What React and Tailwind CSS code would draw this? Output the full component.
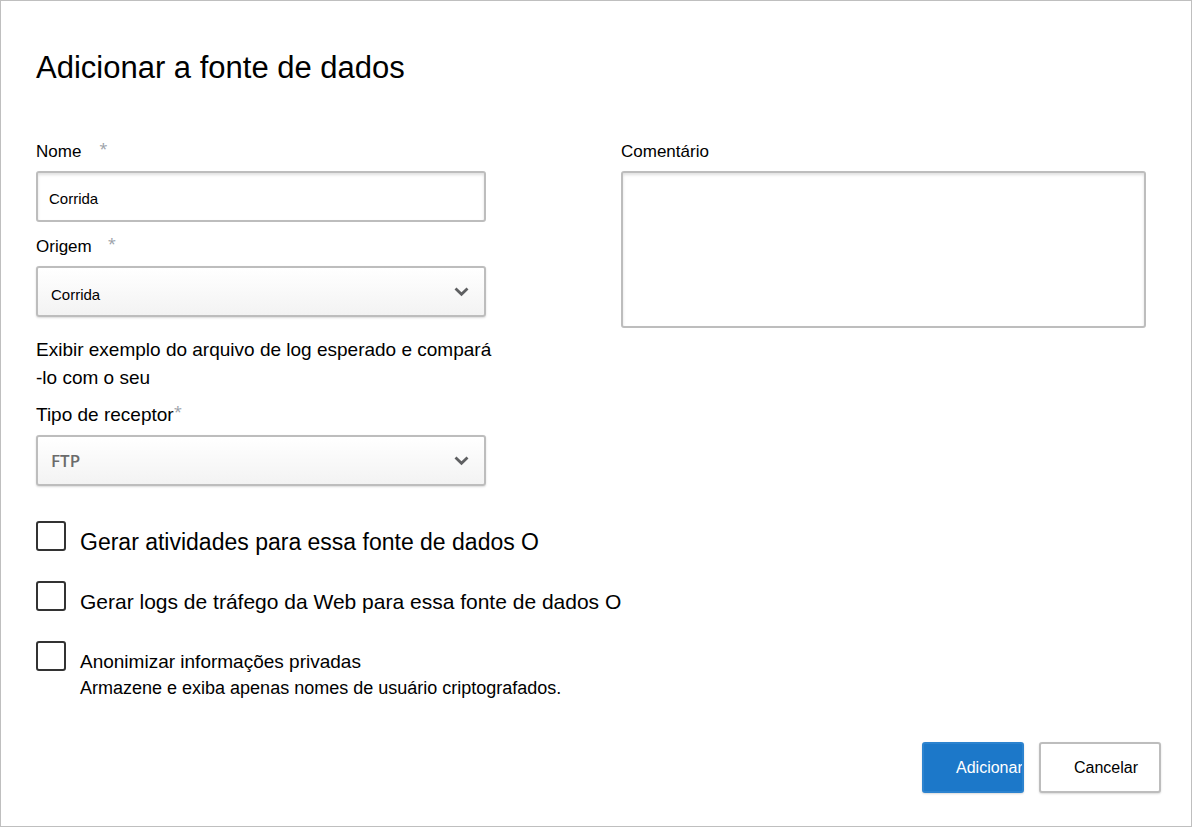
import { useState } from 'react';

const options = [
  {
    id: 'activities',
    label: 'Gerar atividades para essa fonte de dados O',
    size: 'text-[23px]',
  },
  {
    id: 'weblogs',
    label: 'Gerar logs de tráfego da Web para essa fonte de dados O',
    size: 'text-[21px]',
  },
  {
    id: 'anonymize',
    label: 'Anonimizar informações privadas',
    size: 'text-[19px]',
    hint: 'Armazene e exiba apenas nomes de usuário criptografados.',
  },
];

function Required() {
  return (
    <span aria-hidden="true" className="self-start text-[15px] leading-4 text-[#9a9fa8] font-['Open_Sans']">
      *
    </span>
  );
}

function Select({ id, className = '', children }) {
  return (
    <div className="relative">
      <select
        id={id}
        className={`block h-[51px] w-full appearance-none rounded-[3px] border-2 border-[#bdbdbd] bg-linear-to-b from-white to-[#f3f3f3] pl-[13px] pr-12 shadow-[0_1px_2px_rgba(0,0,0,0.15)] ${className}`}
      >
        {children}
      </select>
      <svg
        className="pointer-events-none absolute right-4 top-5 h-3 w-4"
        viewBox="0 0 16 12"
        fill="none"
        stroke="#5f6062"
        strokeWidth="2.8"
      >
        <path d="M1.5 2.5 7.5 8.3l6-5.8" />
      </svg>
    </div>
  );
}

export default function App() {
  const [checked, setChecked] = useState({});

  const toggle = (id) => setChecked((prev) => ({ ...prev, [id]: !prev[id] }));

  return (
    <form
      onSubmit={(e) => e.preventDefault()}
      className="flex min-h-screen flex-col border border-[#bfbfbf] bg-white pl-[35px] pr-[30px] pb-[33px] pt-[47px] font-['Liberation_Sans',Arial,sans-serif] text-black"
    >
      <h1 className="text-[31px] leading-10">Adicionar a fonte de dados</h1>

      <div className="mt-[52px] grid grid-cols-[6fr_7fr] gap-x-[135px] pr-[15px]">
        {/* Left column */}
        <div className="min-w-0">
          <div className="flex h-[31px] gap-[18px]">
            <label htmlFor="name" className="text-[17px] leading-6">Nome</label>
            <Required />
          </div>
          <input
            id="name"
            type="text"
            defaultValue="Corrida"
            className="block h-[51px] w-full rounded-[3px] border-2 border-[#bdbdbd] px-[11px] pt-1 text-[15px] shadow-[inset_0_2px_3px_rgba(0,0,0,0.12)]"
          />

          <div className="mt-[13px] flex h-[31px] gap-4">
            <label htmlFor="source" className="text-[17px] leading-6">Origem</label>
            <Required />
          </div>
          <Select id="source" className="pt-2 text-[15px]">
            <option>Corrida</option>
          </Select>

          <p className="mt-[19px] whitespace-nowrap text-[19px] leading-7">
            Exibir exemplo do arquivo de log esperado e compará
            <br />
            -lo com o seu
          </p>

          <div className="mt-[11px] flex h-8">
            <label htmlFor="receiver" className="text-[19px] leading-6">Tipo de receptor</label>
            <Required />
          </div>
          <Select id="receiver" className="font-['Open_Sans'] text-[17px] font-semibold text-[#6b6b6b]">
            <option>FTP</option>
          </Select>
        </div>

        {/* Right column */}
        <div className="min-w-0">
          <div className="h-[31px]">
            <label htmlFor="comment" className="block text-[17px] leading-6">Comentário</label>
          </div>
          <textarea
            id="comment"
            className="block h-[157px] w-full resize-none rounded-[3px] border-2 border-[#bdbdbd] p-3 text-[15px] shadow-[inset_0_2px_3px_rgba(0,0,0,0.12)]"
          />
        </div>
      </div>

      <div className="mt-[35px] flex flex-col gap-[26px]">
        {options.map((o) => (
          <div key={o.id} className="flex gap-[14px]">
            <input
              id={o.id}
              type="checkbox"
              checked={!!checked[o.id]}
              onChange={() => toggle(o.id)}
              className="h-[30px] w-[30px] shrink-0 appearance-none rounded-[3px] border-2 border-[#333] bg-white checked:bg-[#1c78c9]"
            />
            <div className="pt-2">
              <label htmlFor={o.id} className={`block leading-[26px] ${o.size}`}>{o.label}</label>
              {o.hint && <p className="text-[18px] leading-[26px]">{o.hint}</p>}
            </div>
          </div>
        ))}
      </div>

      <div className="mt-auto flex justify-end gap-[15px] pt-8">
        <button
          type="submit"
          className="h-[51px] w-[102px] overflow-hidden whitespace-nowrap rounded-[3px] border-2 border-[#2c83cf] bg-[#1c78c9] pl-8 text-left text-[16px] text-white shadow-[0_1px_2px_rgba(0,0,0,0.15)]"
        >
          Adicionar
        </button>
        <button
          type="button"
          className="h-[51px] w-[122px] rounded-[3px] border-2 border-[#bdbdbd] bg-white pl-[33px] text-left text-[16px] shadow-[0_1px_2px_rgba(0,0,0,0.15)]"
        >
          Cancelar
        </button>
      </div>
    </form>
  );
}
